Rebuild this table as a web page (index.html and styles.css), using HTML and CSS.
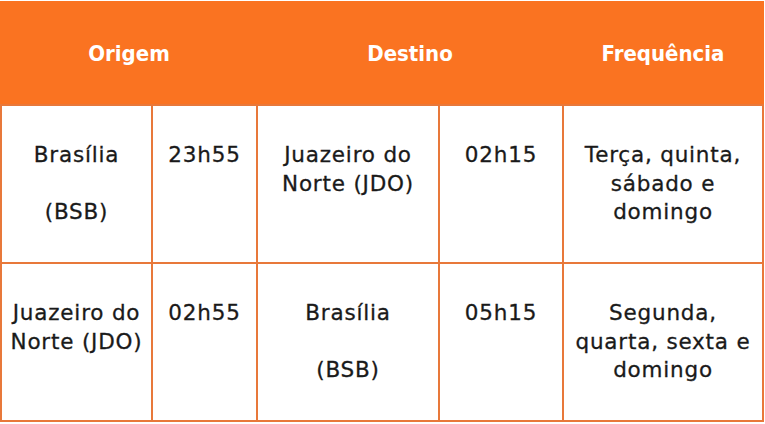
FILE: index.html
```html
<!DOCTYPE html>
<html lang="pt">
<head>
<meta charset="utf-8">
<link rel="stylesheet" href="styles.css">
</head>
<body>
<table class="voos">
  <colgroup>
    <col class="c1"><col class="c2"><col class="c3"><col class="c4"><col class="c5">
  </colgroup>
  <thead>
    <tr>
      <th colspan="2">Origem</th>
      <th colspan="2">Destino</th>
      <th>Frequência</th>
    </tr>
  </thead>
  <tbody>
    <tr>
      <td><p>Brasília</p><p>(BSB)</p></td>
      <td><p>23h55</p></td>
      <td><p>Juazeiro do Norte (JDO)</p></td>
      <td><p>02h15</p></td>
      <td><p>Terça, quinta, sábado e domingo</p></td>
    </tr>
    <tr>
      <td><p>Juazeiro do Norte (JDO)</p></td>
      <td><p>02h55</p></td>
      <td><p>Brasília</p><p>(BSB)</p></td>
      <td><p>05h15</p></td>
      <td><p>Segunda, quarta, sexta e domingo</p></td>
    </tr>
  </tbody>
</table>
</body>
</html>
```
FILE: styles.css
```css
html, body {
  margin: 0;
  padding: 0;
  background: #ffffff;
}
body {
  padding: 1px 0 0 0;
}
.voos {
  border-collapse: collapse;
  table-layout: fixed;
  width: 762px;
  font-family: "DejaVu Sans", Verdana, sans-serif;
  color: #1a1a1a;
}
.c1 { width: 151px; }
.c2 { width: 105px; }
.c3 { width: 182px; }
.c4 { width: 124px; }
.c5 { width: 200px; }
.voos th {
  background: #fa7321;
  color: #ffffff;
  font-family: "DejaVu Sans Condensed", "DejaVu Sans", sans-serif;
  font-weight: bold;
  font-size: 22px;
  height: 101px;
  padding: 0;
  border: 2px solid #fa7321;
  border-bottom: 2px solid #e8783a;
}
.voos td {
  border: 2px solid #e8783a;
  vertical-align: top;
  text-align: center;
  height: 158px;
  padding: 35px 4px 0 4px;
  font-size: 21.5px;
  letter-spacing: 0.8px;
  line-height: 28.5px;
  box-sizing: border-box;
  -webkit-text-stroke: 0.3px #1a1a1a;
}
.voos td p {
  margin: 0 0 28.5px 0;
}
.voos td p:last-child {
  margin-bottom: 0;
}
```
